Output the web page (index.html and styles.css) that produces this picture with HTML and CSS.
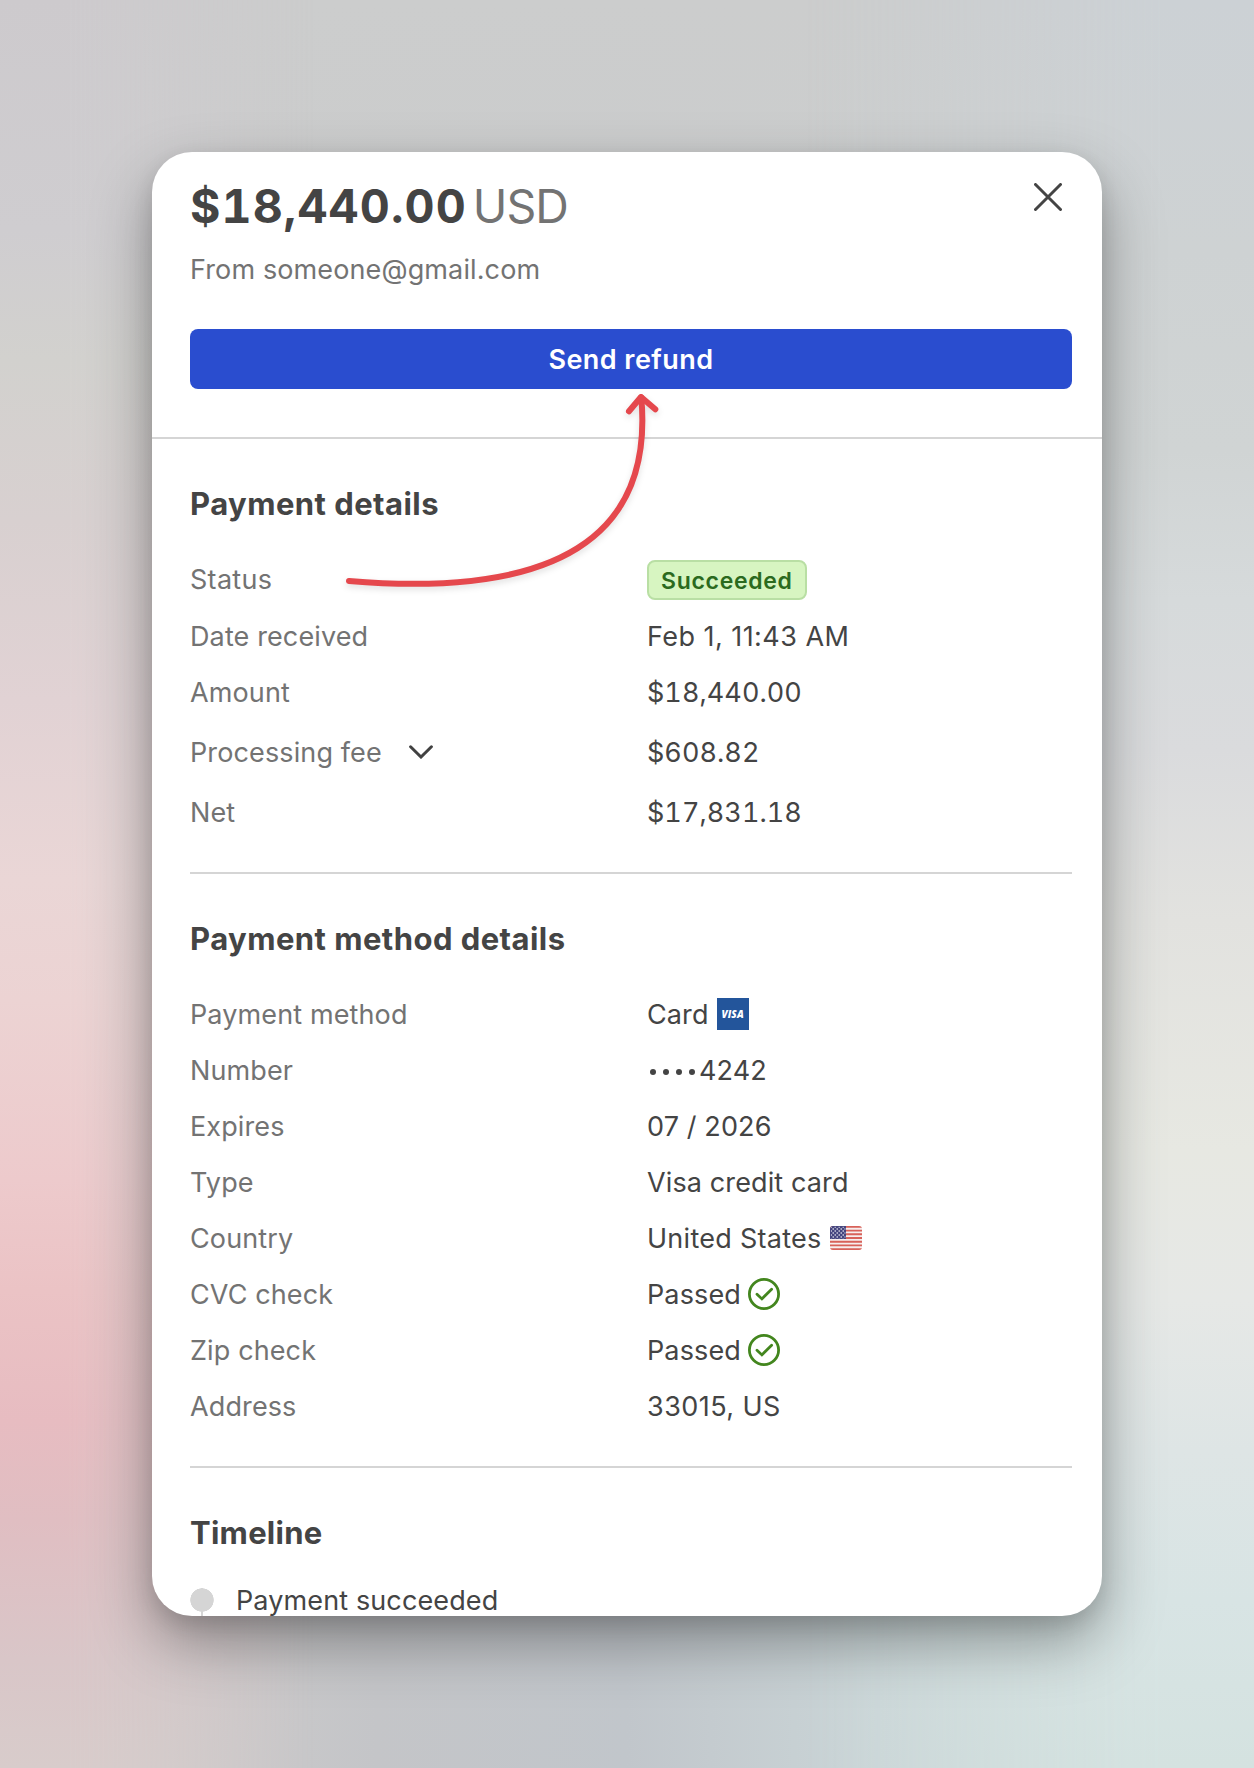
FILE: index.html
```html
<!DOCTYPE html>
<html lang="en">
<head>
  <meta charset="UTF-8" />
  <meta name="viewport" content="width=device-width, initial-scale=1.0" />
  <title>Payment $18,440.00</title>
  <link rel="stylesheet" href="styles.css">
</head>
<body>

<div class="panel">
  <header>
    <div class="header-top">
      <h1>$18,440.00<span class="currency">USD</span></h1>
      <button class="close-btn" type="button" aria-label="Close">
        <svg width="28" height="28" viewBox="0 0 28 28" fill="none" stroke="#444" stroke-width="3" stroke-linecap="round">
          <path d="M1.5 1.5 26.5 26.5M26.5 1.5 1.5 26.5" />
        </svg>
      </button>
    </div>
    <p class="from">From someone@gmail.com</p>
    <button class="refund-btn" type="button">Send refund</button>
  </header>

  <section>
    <h2>Payment details</h2>
    <dl>
      <div class="row"><dt class="status-label">Status</dt><dd><span class="badge">Succeeded</span></dd></div>
      <div class="row"><dt>Date received</dt><dd class="date">Feb 1, 11:43 AM</dd></div>
      <div class="row"><dt>Amount</dt><dd class="money">$18,440.00</dd></div>
      <div class="row tall">
        <dt>Processing fee
          <svg class="chevron" width="24" height="14" viewBox="0 0 24 14" fill="none" stroke="#414141" stroke-width="3" stroke-linecap="round">
            <path d="M1.6 1.8 12 12 22.4 1.8" />
          </svg>
        </dt>
        <dd class="money">$608.82</dd>
      </div>
      <div class="row"><dt>Net</dt><dd class="money">$17,831.18</dd></div>
    </dl>
  </section>

  <section class="method">
    <h2>Payment method details</h2>
    <dl>
      <div class="row"><dt>Payment method</dt><dd>Card <span class="visa">VISA</span></dd></div>
      <div class="row">
        <dt>Number</dt>
        <dd><span class="dots"><i></i><i></i><i></i><i></i></span>4242</dd>
      </div>
      <div class="row"><dt>Expires</dt><dd>07 / 2026</dd></div>
      <div class="row"><dt>Type</dt><dd>Visa credit card</dd></div>
      <div class="row">
        <dt>Country</dt>
        <dd class="country">United States
          <svg class="flag" width="32" height="24" viewBox="0 0 32 24">
            <defs>
              <clipPath id="flag-shape"><rect width="32" height="24" rx="3" /></clipPath>
              <pattern id="stars" width="4" height="4" patternUnits="userSpaceOnUse">
                <circle cx="1.2" cy="1" r=".75" fill="#fff" />
                <circle cx="3.2" cy="3" r=".75" fill="#fff" />
              </pattern>
            </defs>
            <g clip-path="url(#flag-shape)">
              <rect width="32" height="24" fill="#f7eeee" />
              <path d="M0 .9H32M0 4.6H32M0 8.3H32M0 12H32M0 15.7H32M0 19.4H32M0 23.1H32" stroke="#d8625a" stroke-width="1.9" />
              <rect width="16" height="13" fill="#46467f" />
              <rect x=".8" y=".8" width="14.6" height="11.6" fill="url(#stars)" />
            </g>
          </svg>
        </dd>
      </div>
      <div class="row">
        <dt>CVC check</dt>
        <dd>Passed
          <svg class="check" width="32" height="32" viewBox="0 0 32 32" fill="none" stroke="#43861e" stroke-width="2.8" stroke-linecap="round">
            <circle cx="16" cy="16" r="14.6" />
            <path d="M9 16.2 13.9 20.9 23.6 11.3" />
          </svg>
        </dd>
      </div>
      <div class="row">
        <dt>Zip check</dt>
        <dd>Passed
          <svg class="check" width="32" height="32" viewBox="0 0 32 32" fill="none" stroke="#43861e" stroke-width="2.8" stroke-linecap="round">
            <circle cx="16" cy="16" r="14.6" />
            <path d="M9 16.2 13.9 20.9 23.6 11.3" />
          </svg>
        </dd>
      </div>
      <div class="row"><dt>Address</dt><dd class="address">33015, US</dd></div>
    </dl>
  </section>

  <section class="timeline">
    <h2>Timeline</h2>
    <div class="event">
      <div class="marker"></div>
      <p>Payment succeeded</p>
    </div>
  </section>

  <!-- arrow drawn over the panel, from Status to the refund button -->
  <svg class="arrow" width="330" height="210" viewBox="340 386 330 210" fill="none" stroke="#e5484d" stroke-width="6" stroke-linecap="round" stroke-linejoin="round">
    <path d="M349 581Q660 607 641.3 397.5" />
    <path d="M629 411.3 641 397 655.3 409.3" />
  </svg>
</div>

</body>
</html>
```

FILE: styles.css
```css
* { box-sizing: border-box; margin: 0; padding: 0; }

body {
  position: relative;
  font-family: 'Inter', sans-serif;
  font-size: 27px;
  letter-spacing: 0.12px;
  color: #444;
  height: 1768px;
  padding: 152px;
  overflow: hidden;
  background:
    linear-gradient(#cccdcd 0%, rgba(204, 205, 205, 0) 90%),
    linear-gradient(to right, #d8cccb 0%, #cdcbcb 13%, #c4c5c8 30%, #c1c6cb 50%, #cad5d7 70%, #d4e2e0 100%);
}

/* soft colour bands on the two sides of the backdrop */
body::before,
body::after {
  content: '';
  position: absolute;
  top: 0;
  width: 450px;
  height: 100%;
}

body::before {
  left: 0;
  background: linear-gradient(#cdcacd 0, #cfcdd0 230px, #d2d1ce 360px, #d8d0d0 520px, #e1d2d4 700px, #ead6d6 880px, #ecd3d3 1000px, #edcacc 1180px, #ebc3c5 1290px, #e7bcc1 1420px, #e0bec2 1520px, #d9c6c8 1660px, #d8cccb 1768px);
  -webkit-mask-image: linear-gradient(to right, #000 15%, transparent 70%);
  mask-image: linear-gradient(to right, #000 15%, transparent 70%);
}

body::after {
  right: 0;
  background: linear-gradient(#ccd1d5 0, #ced2d3 250px, #d0d4d4 450px, #d6dadb 600px, #dadbdd 750px, #e2e2df 920px, #e7e8e2 1150px, #e6e8e6 1300px, #dee5e5 1450px, #d8e4e4 1600px, #d4e2e0 1768px);
  -webkit-mask-image: linear-gradient(to left, #000 20%, transparent 100%);
  mask-image: linear-gradient(to left, #000 20%, transparent 100%);
}

.panel {
  position: relative;
  z-index: 1;
  width: 950px;
  height: 1464px;
  background: #fff;
  border-radius: 40px;
  box-shadow: 0 8px 20px rgba(0, 0, 0, 0.1), 0 26px 60px rgba(0, 0, 0, 0.34);
  overflow: hidden;
}

header {
  height: 287px;
  padding: 24px 30px 0 38px;
  border-bottom: 2px solid #d5d5d5;
}

.header-top {
  display: flex;
  justify-content: space-between;
  align-items: flex-start;
  height: 60px;
}

h1 {
  font-size: 46.5px;
  font-weight: 700;
  line-height: 60px;
  letter-spacing: 1.1px;
  font-variant-numeric: tabular-nums;
}

.currency {
  margin-left: 6px;
  font-weight: 400;
  letter-spacing: -1px;
  color: #737373;
}

.close-btn {
  margin: 7px 10px 0 0;
  background: none;
  border: none;
  line-height: 0;
}

.from {
  margin-top: 14px;
  line-height: 40px;
  color: #737373;
}

.refund-btn {
  display: block;
  width: 100%;
  height: 60px;
  margin-top: 39px;
  background: #2a4dcf;
  color: #fff;
  font: 600 27px 'Inter', sans-serif;
  letter-spacing: 0.45px;
  border: none;
  border-radius: 8px;
}

section {
  margin: 0 30px 0 38px;
  padding: 45px 0 32px;
  border-bottom: 2px solid #d5d5d5;
}

h2 {
  font-size: 31px;
  font-weight: 700;
  line-height: 40px;
  letter-spacing: 0.45px;
  margin-bottom: 28px;
}

.method h2 {
  margin-bottom: 27px;
}

.row {
  display: flex;
  align-items: center;
  height: 56px;
}

.row.tall {
  height: 64px;
}

dt {
  display: flex;
  align-items: center;
  width: 457px;
  color: #737373;
}

.status-label {
  padding-bottom: 2px;
  letter-spacing: 0.3px;
}

dd {
  display: flex;
  align-items: center;
}

.date,
.address {
  letter-spacing: 0.45px;
}

.money {
  letter-spacing: 0.05px;
  font-variant-numeric: tabular-nums;
}

.country {
  letter-spacing: 0.27px;
}

.chevron {
  margin-left: 27px;
}

.badge {
  height: 40px;
  padding: 0 12px;
  font-size: 23px;
  font-weight: 600;
  line-height: 38px;
  letter-spacing: 0.7px;
  color: #2b6a1e;
  background: #d7f5c1;
  border: 2px solid #b9dfa4;
  border-radius: 8px;
}

.visa {
  width: 32px;
  height: 32px;
  margin-left: 8px;
  background: #23559b;
  color: #fff;
  font: italic 800 10px/32px 'Open Sans', sans-serif;
  text-align: center;
}

.dots {
  display: flex;
  gap: 7px;
  padding: 3px 4px 0 3px;
}

.dots i {
  width: 6px;
  height: 6px;
  border-radius: 50%;
  background: #444;
}

.flag {
  margin-left: 8px;
}

.check {
  margin-left: 7px;
}

.timeline {
  border-bottom: none;
}

.timeline h2 {
  letter-spacing: 0.25px;
  margin-bottom: 26px;
}

.event {
  display: flex;
  gap: 22px;
  line-height: 44px;
}

/* circle with the line to the next event under it */
.marker {
  width: 24px;
  height: 60px;
  margin-top: 9px;
  background:
    radial-gradient(circle 12px at 12px 12px, #d5d5d5 95%, transparent) no-repeat,
    linear-gradient(#d5d5d5, #d5d5d5) center 0 / 2px 100% no-repeat;
}

.arrow {
  position: absolute;
  left: 188px;
  top: 234px;
  filter: drop-shadow(0 3px 3px rgba(0, 0, 0, 0.12));
}
```
